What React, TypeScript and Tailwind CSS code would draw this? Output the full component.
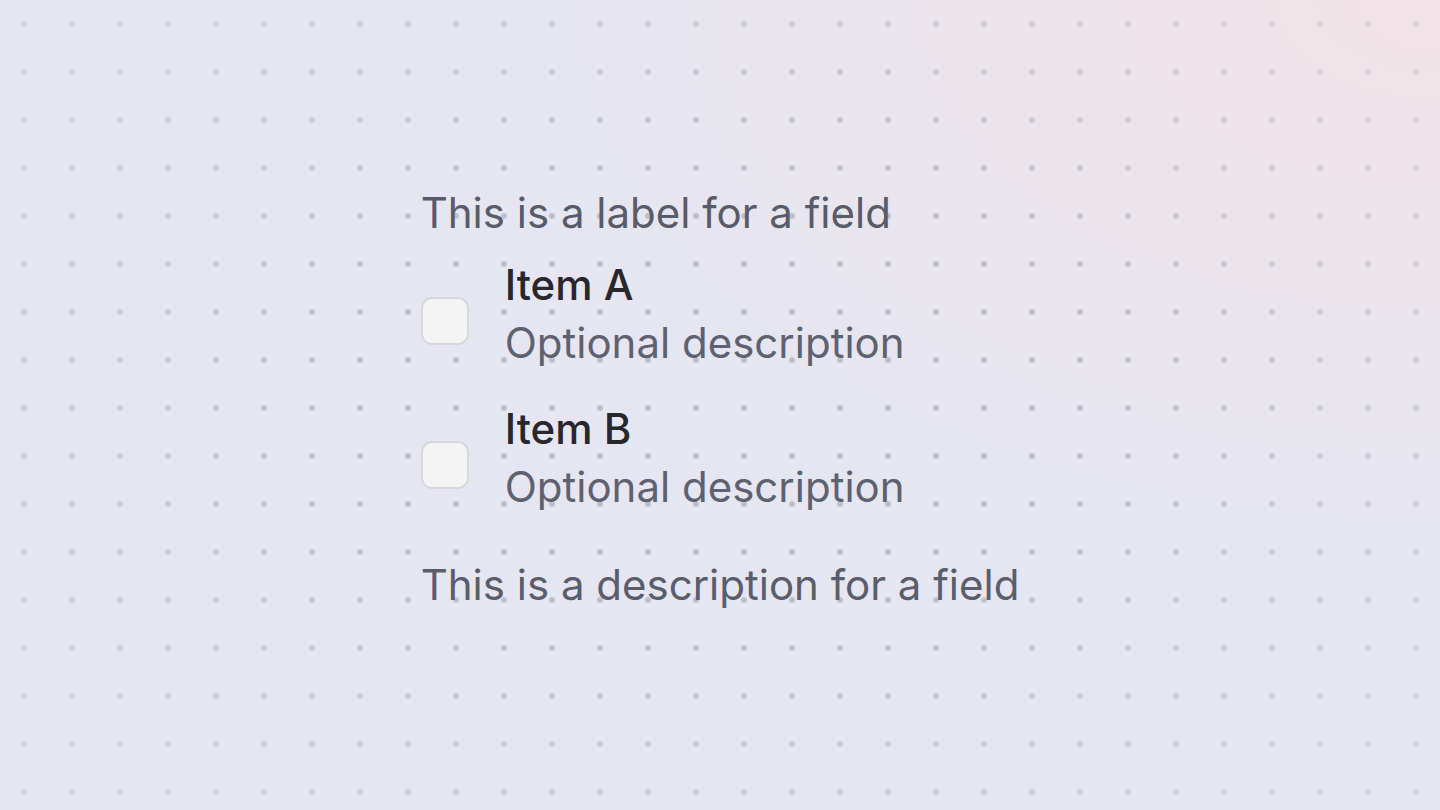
import React from "react";

function Checkbox() {
  return (
    <span className="mt-[41px] block h-12 w-12 shrink-0 rounded-[11px] border-2 border-[#d8d8dc] bg-[#f4f4f5]" />
  );
}

function Item({ title, desc }: { title: string; desc: string }) {
  return (
    <div className="flex items-start gap-9">
      <Checkbox />
      <div className="flex flex-col">
        <span className="text-[42px] leading-[58px] font-[450] text-[#28282c]">{title}</span>
        <span className="text-[42px] leading-[58px] text-[#5e6170]">{desc}</span>
      </div>
    </div>
  );
}

export default function App() {
  return (
    <div
      className="relative min-h-screen w-full overflow-hidden bg-[#e5e6f1]"
      style={{ fontFamily: "Inter, 'Noto Sans', sans-serif" }}
    >
      <div className="pointer-events-none absolute inset-0 bg-[radial-gradient(ellipse_80%_85%_at_100%_0%,#f2e3e8_0%,rgba(241,227,232,0.6)_40%,rgba(229,230,241,0)_80%)]" />
      <div className="pointer-events-none absolute inset-0 bg-[radial-gradient(circle,#bfc0cc_2.7px,transparent_3.2px)] bg-[size:48px_48px] [mask-image:radial-gradient(ellipse_60%_65%_at_50%_50%,#000_40%,rgba(0,0,0,0.45)_100%)]" />
      <div className="relative flex justify-center pt-[182px]">
        <div className="flex flex-col">
          <span className="text-[42px] leading-[62px] text-[#585b69]">This is a label for a field</span>
          <div className="mt-[12px] flex flex-col gap-7">
            <Item title="Item A" desc="Optional description" />
            <Item title="Item B" desc="Optional description" />
          </div>
          <span className="mt-[38px] text-[42px] leading-[62px] text-[#5a5d6b]">
            This is a description for a field
          </span>
        </div>
      </div>
    </div>
  );
}
